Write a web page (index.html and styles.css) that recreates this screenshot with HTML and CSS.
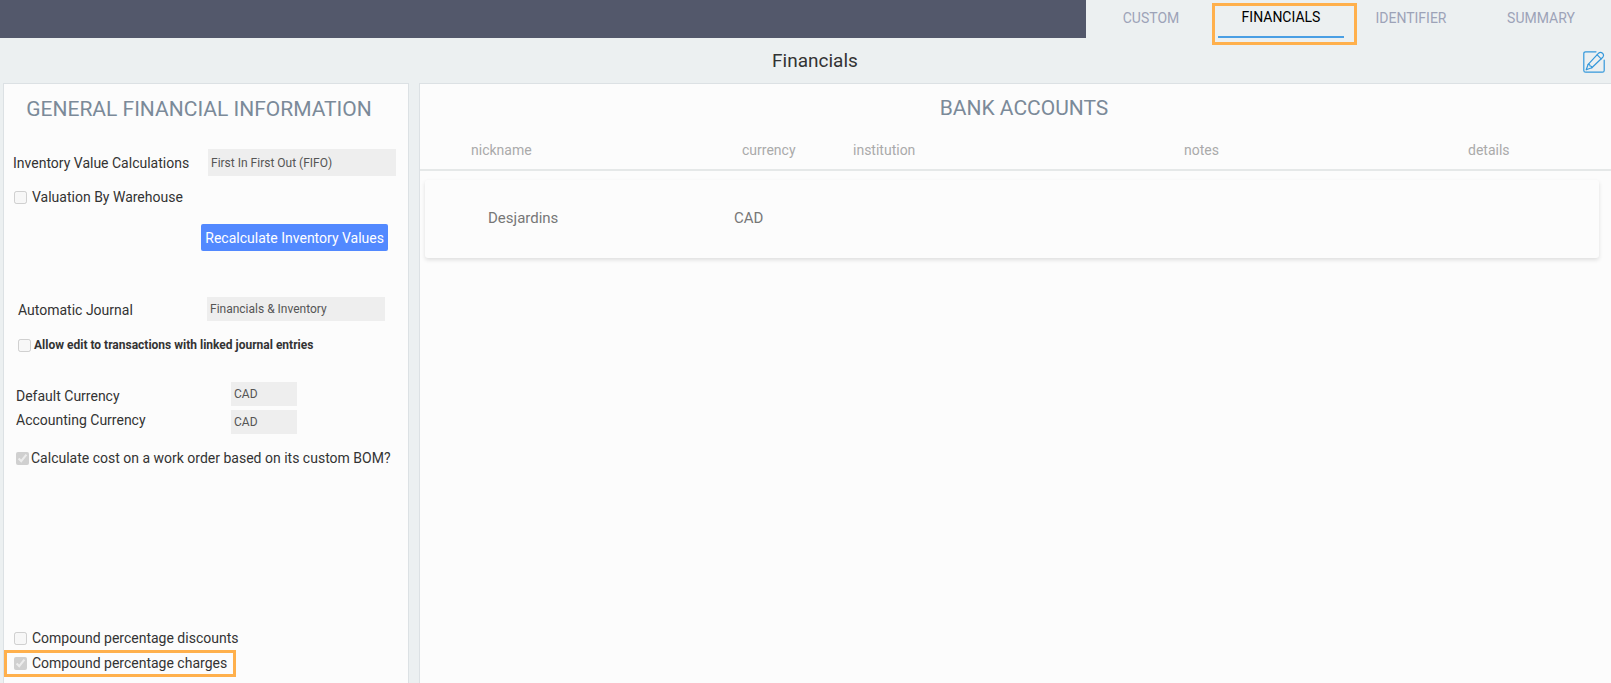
FILE: index.html
```html
<!DOCTYPE html>
<html lang="en">
<head>
<meta charset="utf-8">
<title>Financials</title>
<link rel="stylesheet" href="styles.css">
</head>
<body>
<header class="topbar">
  <div class="topbar-fill"></div>
  <nav class="tabs">
    <a class="tab" href="#custom">CUSTOM</a>
    <a class="tab tab-active" href="#financials" aria-current="page">FINANCIALS</a>
    <a class="tab" href="#identifier">IDENTIFIER</a>
    <a class="tab" href="#summary">SUMMARY</a>
  </nav>
</header>
<div class="titlebar">
  <h1 class="title">Financials</h1>
  <button class="edit" type="button" aria-label="Edit">
    <svg class="edit-icon" viewBox="0 0 22 22" width="22" height="22" fill="none" stroke="#3498db" stroke-width="1.2" stroke-linejoin="round" stroke-linecap="round">
      <path d="M13 .8H2.6Q.8 .8 .8 2.6V19.4Q.8 21.2 2.6 21.2H19.4Q21.2 21.2 21.2 19.4V9"/>
      <path d="M3.2 18.8 5.2 13.3 15.6 2.2Q17.5 .5 19.5 2.2Q21.4 4.2 19.8 6.2L8.8 16.8Z"/>
      <path d="M14.2 3.8 18.2 7.8M5.2 13.3Q7 13 7 15Q9 15 8.8 16.8"/>
    </svg>
  </button>
</div>
<main class="panels">
  <section class="panel general">
    <h2 class="heading">GENERAL FINANCIAL INFORMATION</h2>
    <div class="row row-inventory">
      <label for="calc">Inventory Value Calculations</label>
      <select class="field" id="calc" disabled><option>First In First Out (FIFO)</option></select>
    </div>
    <label class="check check-warehouse"><input type="checkbox" disabled>Valuation By Warehouse</label>
    <button class="recalc" type="button">Recalculate Inventory Values</button>
    <div class="row row-journal">
      <label for="journal">Automatic Journal</label>
      <select class="field" id="journal" disabled><option>Financials &amp; Inventory</option></select>
    </div>
    <label class="check check-linked"><input type="checkbox" disabled>Allow edit to transactions with linked journal entries</label>
    <div class="currencies">
      <label for="default-currency">Default Currency</label>
      <select class="field" id="default-currency" disabled><option>CAD</option></select>
      <label for="accounting-currency">Accounting Currency</label>
      <select class="field" id="accounting-currency" disabled><option>CAD</option></select>
    </div>
    <label class="check check-bom"><input type="checkbox" checked disabled>Calculate cost on a work order based on its custom BOM?</label>
    <div class="compound">
      <label class="check"><input type="checkbox" disabled>Compound percentage discounts</label>
      <label class="check check-marked"><input type="checkbox" checked disabled>Compound percentage charges</label>
    </div>
  </section>
  <section class="panel bank">
    <h2 class="heading">BANK ACCOUNTS</h2>
    <table class="accounts">
      <thead>
        <tr class="accounts-head"><th>nickname</th><th>currency</th><th>institution</th><th>notes</th><th>details</th></tr>
      </thead>
      <tbody>
        <tr class="account"><td>Desjardins</td><td>CAD</td><td></td><td></td><td></td></tr>
      </tbody>
    </table>
  </section>
</main>
</body>
</html>
```
FILE: styles.css
```css
*, *::before, *::after { box-sizing: border-box; }

body {
  margin: 0;
  min-height: 100vh;
  display: flex;
  flex-direction: column;
  background: #ecf0f1;
  color: #333;
  font-family: Roboto, "Liberation Sans", sans-serif;
  font-size: 14px;
  line-height: 20px;
}

h1, h2 { margin: 0; font-weight: 400; }

.topbar { display: flex; height: 38px; }
.topbar-fill { flex: 1; background: #53586b; }
.tabs { display: flex; padding-right: 5px; }

.tab {
  position: relative;
  width: 130px;
  padding-top: 8px;
  text-align: center;
  text-decoration: none;
  color: #9da3b8;
}
.tab-active {
  margin: 0 2px;
  width: 126px;
  padding-top: 7px;
  border-bottom: 2px solid #4a9fe4;
  color: #000;
}
.tab-active::after {
  content: "";
  position: absolute;
  inset: 3px -13px -9px -6px;
  border: 3px solid #ffb04c;
}

.titlebar {
  display: grid;
  grid-template-columns: 1fr auto 1fr;
  height: 45px;
  padding: 11px 6px 0 25px;
}
.title { grid-column: 2; font-size: 19px; line-height: 24px; }
.edit {
  justify-self: end;
  align-self: start;
  display: flex;
  margin-top: 2px;
  padding: 0;
  border: 0;
  background: none;
}

.panels {
  flex: 1;
  display: grid;
  grid-template-columns: 406px 1fr;
  gap: 10px;
  padding-left: 3px;
}
.panel {
  border: 1px solid #dce1e4;
  border-bottom: 0;
  background: #fcfcfc;
}
.bank { border-right: 0; }
.heading {
  font-size: 21px;
  line-height: 28px;
  text-align: center;
  color: #7b8a99;
}

.general {
  display: flex;
  flex-direction: column;
  padding: 11px 0 6px;
}
.general .heading { padding-right: 14px; }

.row { display: flex; align-items: center; justify-content: space-between; }
.row-inventory { margin-top: 26px; padding: 0 12px 0 9px; }
.row-journal { margin-top: 46px; padding: 0 23px 0 14px; }
.row-journal label { padding-top: 2px; }

.field {
  appearance: none;
  height: 24px;
  padding: 0 3px;
  border: 0;
  border-radius: 0;
  background: #eee;
  color: #555;
  font: 12px Roboto, "Liberation Sans", sans-serif;
  opacity: 1;
}
.row .field { width: 178px; }
.row-inventory .field { width: 188px; height: 27px; }

.check { display: flex; align-items: center; gap: 5px; padding-left: 10px; }
.check input { width: 13px; height: 13px; margin: 0; }
.check-warehouse { margin-top: 11px; }
.check-linked {
  margin-top: 14px;
  padding-left: 14px;
  gap: 3px;
  font-size: 12px;
  font-weight: 700;
}

.recalc {
  align-self: flex-end;
  height: 27px;
  margin: 17px 20px 0 0;
  padding: 0 4px;
  border: 0;
  border-radius: 2px;
  background: #5289ff;
  color: #fff;
  font: 400 14px Roboto, "Liberation Sans", sans-serif;
}

.currencies {
  display: grid;
  grid-template-columns: 215px 66px;
  align-items: end;
  gap: 4px 0;
  margin-top: 27px;
  padding-left: 12px;
}
.currencies label:first-child { align-self: end; }
.currencies label:nth-of-type(2) { align-self: start; }
.check-bom { margin-top: 14px; padding-left: 12px; gap: 2px; }

.compound { margin-top: auto; display: grid; gap: 5px; padding-bottom: 4px; }
.check-marked { position: relative; }
.check-marked::after {
  content: "";
  position: absolute;
  left: 0;
  top: -3px;
  width: 232px;
  height: 27px;
  border: 3px solid #ffb04c;
}

.bank { padding-top: 10px; }
.bank .heading { padding-left: 17px; }

.accounts, .accounts thead, .accounts tbody { display: block; }
.accounts th, .accounts td { padding: 0; text-align: left; font-weight: 400; }
.accounts-head {
  display: grid;
  grid-template-columns: 271fr 111fr 331fr 284fr 143fr;
  margin-top: 18px;
  padding: 0 0 9px 51px;
  border-bottom: 2px solid #e5e8e8;
  color: #aaa;
}
.account {
  display: grid;
  grid-template-columns: 246fr 111fr 331fr 284fr 139fr;
  align-items: center;
  height: 78px;
  margin: 9px 12px 0 5px;
  padding: 0 0 3px 63px;
  border-radius: 3px;
  box-shadow: 0 2px 4px rgba(0, 0, 0, 0.12);
  color: #777;
  font-size: 15px;
}
```
